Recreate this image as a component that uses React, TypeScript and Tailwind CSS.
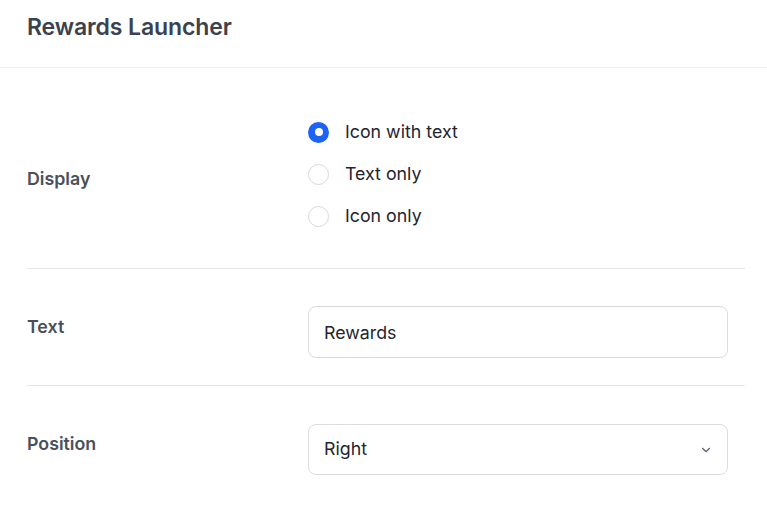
import { ChevronDown } from 'lucide-react';

const options = ['Icon with text', 'Text only', 'Icon only'];

const Radio = ({ checked, label }: { checked: boolean; label: string }) => (
    <div className="h-[42px] flex items-center">
        {checked ? (
            <span className="w-[21px] h-[21px] rounded-full bg-[#1d63f6] flex items-center justify-center">
                <span className="w-[8px] h-[8px] rounded-full bg-white" />
            </span>
        ) : (
            <span className="w-[21px] h-[21px] rounded-full border-[1.5px] border-[#d5d8de] bg-white" />
        )}
        <span className="ml-[16px] text-[17.8px] text-[#1f2430]">{label}</span>
    </div>
);

export default function App() {
    return (
        <div className="w-[767px] h-[516px] bg-white overflow-hidden" style={{ fontFamily: 'Inter, "Noto Sans", sans-serif' }}>
            <header className="h-[68px] px-[27px] pt-[13px] border-b border-[#efefef]">
                <h1 className="text-[23px] leading-[29px] font-semibold text-[#3b424d] tracking-[-0.1px]">Rewards Launcher</h1>
            </header>

            <div className="pl-[27px] pr-[22px]">
                {/* Display */}
                <div className="h-[201px] pt-[12px] flex items-center border-b border-[#e3e5e8]">
                    <div className="w-[281px] pt-[10px] text-[17.8px] font-semibold text-[#4a505b]">Display</div>
                    <div className="flex flex-col">
                        {options.map((o, i) => (
                            <Radio key={o} checked={i === 0} label={o} />
                        ))}
                    </div>
                </div>

                {/* Text */}
                <div className="pt-[37px] pb-[27px] flex items-center border-b border-[#e3e5e8]">
                    <div className="w-[281px] mb-[10px] text-[17.8px] font-semibold text-[#4a505b]">Text</div>
                    <input
                        defaultValue="Rewards"
                        className="w-[420px] h-[52px] px-[15px] rounded-[8px] border border-[#d9dce1] text-[17.8px] text-[#1f2430] outline-none"
                    />
                </div>

                {/* Position */}
                <div className="pt-[38px] flex items-center">
                    <div className="w-[281px] mb-[10px] text-[17.8px] font-semibold text-[#4a505b]">Position</div>
                    <div className="w-[420px] h-[51px] pl-[15px] pr-[14px] rounded-[8px] border border-[#d9dce1] flex items-center justify-between">
                        <span className="text-[17.8px] text-[#1f2430]">Right</span>
                        <ChevronDown className="w-[14px] h-[14px] text-[#5b6270]" strokeWidth={2} />
                    </div>
                </div>
            </div>
        </div>
    );
}
